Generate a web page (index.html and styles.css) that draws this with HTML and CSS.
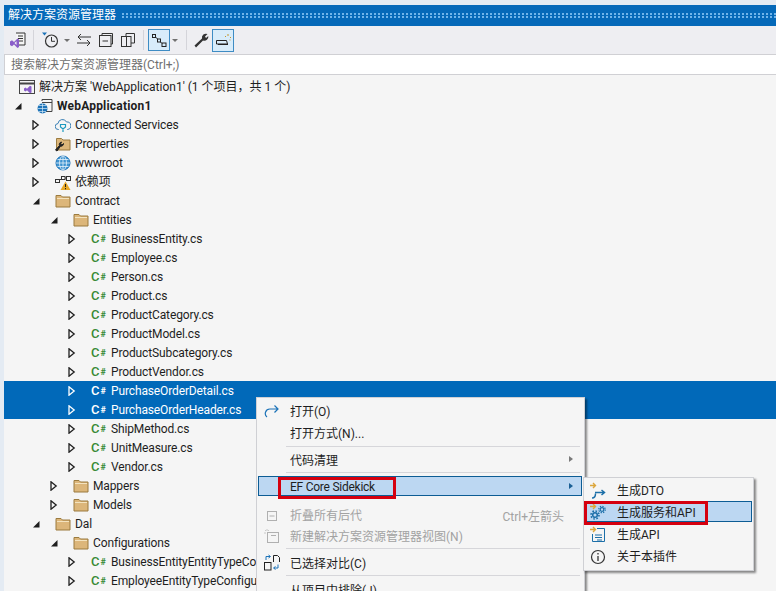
FILE: index.html
```html
<!DOCTYPE html>
<html lang="zh-CN">
<head>
<meta charset="utf-8">
<title>解决方案资源管理器</title>
<link rel="stylesheet" href="styles.css">
</head>
<body>
<svg class="defs" width="0" height="0" aria-hidden="true">
  <symbol id="folder" viewBox="0 0 16 16"><path d="M1 2.500h5l1.500 1.500H15v10H1z" fill="#dcb67a" stroke="#9b7b3f"/><path d="M2 5.500h12" stroke="#f3e3bf"/></symbol>
  <symbol id="open" viewBox="0 0 10 10"><path d="M2 0.800v8.400L7.200 5z" fill="none" stroke="#1e1e1e" stroke-width="1.300"/></symbol>
  <symbol id="opened" viewBox="0 0 10 10"><path d="M8.500 2v6.500h-6.500z" fill="#1e1e1e"/></symbol>
  <symbol id="openw" viewBox="0 0 10 10"><path d="M2 0.800v8.400L7.200 5z" fill="none" stroke="#fff" stroke-width="1.300"/></symbol>
</svg>

<div class="window">
  <header class="title"><span class="title-text">解决方案资源管理器</span><span class="grip"></span></header>

  <div class="toolbar">
    <span class="tb"><svg width="18" height="18" viewBox="0 0 18 18"><path d="M7 2h9v12H8" fill="#f5f5f5" stroke="#333"/><path d="M9 5h5M9 7.500h5M9 10h5" stroke="#333"/><path d="M1 10.500l2-1.200 2 1.700 3.500-3.500 1.500 1v7.500l-1.500 1-3.500-3.500-2 1.700-2-1.200z" fill="#8a5ec9"/><path d="M7.500 10.200v3.800l-2-1.900z" fill="#f5f5f5"/></svg></span>
    <i class="sep s1"></i>
    <span class="tb"><svg width="18" height="18" viewBox="0 0 18 18"><path d="M1 1.500h5l-2.500 3z" fill="#1c73b8"/><circle cx="10.500" cy="10" r="6" fill="none" stroke="#333" stroke-width="1.200"/><path d="M10.500 6v4.300h3.500" fill="none" stroke="#333"/></svg></span>
    <span class="drop"></span>
    <span class="tb"><svg width="16" height="14" viewBox="0 0 16 14"><path d="M15 4H2M5 1L2 4l3 3M1 10h13M11 7l3 3-3 3" fill="none" stroke="#333"/></svg></span>
    <span class="tb g1"><svg width="16" height="16" viewBox="0 0 16 16"><path d="M4 3V1.500h10.500V12H13" fill="none" stroke="#333"/><rect x="1.500" y="3.500" width="11.500" height="11" fill="none" stroke="#333"/><path d="M4.500 9h5.500" stroke="#333"/></svg></span>
    <span class="tb g1"><svg width="16" height="16" viewBox="0 0 16 16"><path d="M6 4V1.500h8.500V11H11" fill="none" stroke="#333"/><rect x="1.500" y="4.500" width="9.500" height="10" fill="none" stroke="#333"/><path d="M6.500 4.500v10" stroke="#333"/></svg></span>
    <i class="sep"></i>
    <span class="tb on small"><svg width="16" height="16" viewBox="0 0 16 16"><g fill="none" stroke="#222"><rect x="1.500" y="2.500" width="3" height="3"/><rect x="6.500" y="7" width="3" height="3"/><rect x="11" y="11" width="4" height="3.500"/><path d="M4.500 5l2 2M9.500 10l1.500 1.500"/></g></svg></span>
    <span class="drop d2"></span>
    <i class="sep"></i>
    <span class="tb"><svg width="16" height="16" viewBox="0 0 16 16"><path d="M1.500 13.500L9 6.500a4 4 0 0 1 5.500-4.500l-2.500 2.500 1 1.500 2.300-2a4 4 0 0 1-5.300 4.500l-7 7z" fill="#333"/></svg></span>
    <span class="tb on big"><svg width="17" height="14" viewBox="0 0 17 14"><path d="M1.500 7.500h10l1 3.500H1.500z" fill="none" stroke="#222"/><path d="M3 11.500h10" stroke="#222"/><path d="M10 3l1 1M13 1v2M16 4l-1 1M15.500 7h-1" stroke="#c4962c"/></svg></span>
  </div>

  <div class="search">搜索解决方案资源管理器(Ctrl+;)</div>

  <ul class="tree">
    <li class="row sln"><svg class="ic" width="16" height="16" viewBox="0 0 16 16"><rect x="0.500" y="1.500" width="15" height="13" fill="none" stroke="#444"/><path d="M0.500 4.500h15" stroke="#444" stroke-width="2"/><path d="M5 9.500l1.500-1 1.500 1.300 3-3 1.500.7v6l-1.500.7-3-3-1.500 1.300-1.500-1z" fill="#8a5ec9"/></svg><span>解决方案 'WebApplication1' (1 个项目，共 1 个)</span></li>
    <li class="row l0"><svg class="tg"><use href="#opened"/></svg><svg class="ic" width="16" height="16" viewBox="0 0 16 16"><path d="M5 3V1.500h10v12H9" fill="none" stroke="#444"/><path d="M5 4.500h10" stroke="#444"/><circle cx="5.500" cy="10.500" r="5" fill="#1c73b8"/><path d="M.5 10.500h10M5.500 5.500v10M2 7.500h7M2 13.500h7" stroke="#d6e8f5" stroke-width=".7"/></svg><b>WebApplication1</b></li>
    <li class="row l1"><svg class="tg"><use href="#open"/></svg><svg class="ic" width="16" height="16" viewBox="0 0 16 16"><path d="M4 12.500H3.500a3 3 0 0 1-.5-6 4.500 4.500 0 0 1 8.500-1.500 3.700 3.700 0 0 1 1 7.500H12" fill="none" stroke="#3a80b5"/><path d="M5.500 7.500h5v2.500l-2.500 2-2.500-2zM8 12v3" fill="none" stroke="#1c9ac0" stroke-width="1.200"/></svg><span>Connected Services</span></li>
    <li class="row l1"><svg class="tg"><use href="#open"/></svg><svg class="ic" width="16" height="16" viewBox="0 0 16 16"><path d="M1.500 2.500h5L8 4h7v10H1.500z" fill="#dcb67a" stroke="#9b7b3f"/><path d="M0.500 14l4-4.500a2.500 2.500 0 0 1 2-3.500L5.500 8l1.500 1 1.500-1.500a2.500 2.500 0 0 1-3 2.700L2 15z" fill="#222" stroke="#222"/></svg><span>Properties</span></li>
    <li class="row l1"><svg class="tg"><use href="#open"/></svg><svg class="ic" width="16" height="16" viewBox="0 0 16 16"><circle cx="8" cy="8" r="7" fill="#3f94d1" stroke="#1c73b8"/><path d="M1 8h14M8 1v14M2.500 4.500h11M2.500 11.500h11" stroke="#e4f1fa" stroke-width=".8"/><ellipse cx="8" cy="8" rx="3.500" ry="7" fill="none" stroke="#e4f1fa" stroke-width=".8"/></svg><span>wwwroot</span></li>
    <li class="row l1"><svg class="tg"><use href="#open"/></svg><svg class="ic" width="16" height="16" viewBox="0 0 16 16"><g fill="none" stroke="#333"><rect x="0.500" y="5.500" width="4" height="3"/><rect x="6.500" y="2.500" width="3.500" height="3"/><rect x="11.500" y="2.500" width="4" height="4"/><path d="M4.500 6.500l2-2M10 4h1.500"/></g><path d="M10.500 7.500l-5 8.500h10z" fill="#e8a826"/><path d="M10.500 10v3M10.500 14v1.300" stroke="#222"/></svg><span>依赖项</span></li>
    <li class="row l1"><svg class="tg"><use href="#opened"/></svg><svg class="ic"><use href="#folder"/></svg><span>Contract</span></li>
    <li class="row l2"><svg class="tg"><use href="#opened"/></svg><svg class="ic"><use href="#folder"/></svg><span>Entities</span></li>
    <li class="row l3"><svg class="tg"><use href="#open"/></svg><span class="cs">C<small>#</small></span><span>BusinessEntity.cs</span></li>
    <li class="row l3"><svg class="tg"><use href="#open"/></svg><span class="cs">C<small>#</small></span><span>Employee.cs</span></li>
    <li class="row l3"><svg class="tg"><use href="#open"/></svg><span class="cs">C<small>#</small></span><span>Person.cs</span></li>
    <li class="row l3"><svg class="tg"><use href="#open"/></svg><span class="cs">C<small>#</small></span><span>Product.cs</span></li>
    <li class="row l3"><svg class="tg"><use href="#open"/></svg><span class="cs">C<small>#</small></span><span>ProductCategory.cs</span></li>
    <li class="row l3"><svg class="tg"><use href="#open"/></svg><span class="cs">C<small>#</small></span><span>ProductModel.cs</span></li>
    <li class="row l3"><svg class="tg"><use href="#open"/></svg><span class="cs">C<small>#</small></span><span>ProductSubcategory.cs</span></li>
    <li class="row l3"><svg class="tg"><use href="#open"/></svg><span class="cs">C<small>#</small></span><span>ProductVendor.cs</span></li>
    <li class="row l3 sel"><svg class="tg"><use href="#openw"/></svg><span class="cs">C<small>#</small></span><span>PurchaseOrderDetail.cs</span></li>
    <li class="row l3 sel"><svg class="tg"><use href="#openw"/></svg><span class="cs">C<small>#</small></span><span>PurchaseOrderHeader.cs</span></li>
    <li class="row l3"><svg class="tg"><use href="#open"/></svg><span class="cs">C<small>#</small></span><span>ShipMethod.cs</span></li>
    <li class="row l3"><svg class="tg"><use href="#open"/></svg><span class="cs">C<small>#</small></span><span>UnitMeasure.cs</span></li>
    <li class="row l3"><svg class="tg"><use href="#open"/></svg><span class="cs">C<small>#</small></span><span>Vendor.cs</span></li>
    <li class="row l2"><svg class="tg"><use href="#open"/></svg><svg class="ic"><use href="#folder"/></svg><span>Mappers</span></li>
    <li class="row l2"><svg class="tg"><use href="#open"/></svg><svg class="ic"><use href="#folder"/></svg><span>Models</span></li>
    <li class="row l1"><svg class="tg"><use href="#opened"/></svg><svg class="ic"><use href="#folder"/></svg><span>Dal</span></li>
    <li class="row l2"><svg class="tg"><use href="#opened"/></svg><svg class="ic"><use href="#folder"/></svg><span>Configurations</span></li>
    <li class="row l3"><svg class="tg"><use href="#open"/></svg><span class="cs">C<small>#</small></span><span>BusinessEntityEntityTypeConfiguration.cs</span></li>
    <li class="row l3"><svg class="tg"><use href="#open"/></svg><span class="cs">C<small>#</small></span><span>EmployeeEntityTypeConfiguration.cs</span></li>
  </ul>
</div>

<div class="menu">
  <div class="mi r20"><svg class="mic" width="16" height="16" viewBox="0 0 16 16"><path d="M14 5H6a4.500 4.500 0 0 0-3 8M10.500 1.500L14 5l-3.500 3.500" fill="none" stroke="#1c73b8" stroke-width="1.200"/></svg><span>打开(O)</span></div>
  <div class="mi r23"><span>打开方式(N)...</span></div>
  <hr class="msep">
  <div class="mi r22 up"><span>代码清理</span><i class="arrow"></i></div>
  <hr class="msep">
  <div class="mi hl"><span>EF Core Sidekick</span><i class="arrow blue"></i></div>
  <hr class="msep clear">
  <div class="mi dis r21"><svg class="mic" width="16" height="16" viewBox="0 0 16 16"><rect x="3.500" y="3.500" width="9" height="9" fill="none" stroke="#b0b0b0"/><path d="M5.500 8h5" stroke="#b0b0b0"/></svg><span>折叠所有后代</span><em>Ctrl+左箭头</em></div>
  <div class="mi dis r21"><svg class="mic" width="16" height="16" viewBox="0 0 16 16"><rect x="3.500" y="3.500" width="11" height="10" fill="none" stroke="#b0b0b0"/><path d="M7 6.500h5" stroke="#b0b0b0"/><path d="M1 1l1 1M3 0v2M5 1L4 2M0 4h2" stroke="#c8c8c8"/></svg><span>新建解决方案资源管理器视图(N)</span></div>
  <hr class="msep">
  <div class="mi r22"><svg class="mic cmp" width="18" height="18" viewBox="0 0 18 18"><g fill="none" stroke="#222"><rect x="1.500" y="8.500" width="6.500" height="7.500"/><path d="M10.500 8V1.500h4l2 2V8"/></g><path d="M3 6V2.500h4M5.500 1L7.500 2.500 5.500 4" fill="none" stroke="#1c73b8"/><path d="M15 10.500v3.500h-4M12.500 12.500L10.500 14l2 1.500" fill="none" stroke="#1c73b8"/></svg><span>已选择对比(C)</span></div>
  <hr class="msep">
  <div class="mi r22"><span>从项目中排除(J)</span></div>
</div>

<div class="submenu">
  <div class="si"><svg width="18" height="18" viewBox="0 0 18 18"><path d="M1 3.500h5M4 1l2.500 2.500L4 6" fill="none" stroke="#dca63b" stroke-width="1.400"/><path d="M3 16c3 0 3.500-2 3.500-4.500M6 10.500h9M12.500 8l3 2.500-3 2.500" fill="none" stroke="#1c6fa8" stroke-width="1.500"/></svg><span>生成DTO</span></div>
  <div class="si act"><svg width="18" height="18" viewBox="0 0 18 18"><path d="M1 3.500h5M4 1l2.500 2.500L4 6" fill="none" stroke="#dca63b" stroke-width="1.400"/><circle cx="6" cy="12" r="2.300" fill="none" stroke="#1c6fa8" stroke-width="1.500"/><circle cx="6" cy="12" r="4" fill="none" stroke="#1c6fa8" stroke-width="1.600" stroke-dasharray="1.600 1.540"/><circle cx="13" cy="6.500" r="1.800" fill="none" stroke="#1c6fa8" stroke-width="1.200"/><circle cx="13" cy="6.500" r="3.200" fill="none" stroke="#1c6fa8" stroke-width="1.300" stroke-dasharray="1.300 1.210"/></svg><span>生成服务和API</span></div>
  <div class="si gap"><svg width="18" height="18" viewBox="0 0 18 18"><path d="M1 3.500h5M4 1l2.500 2.500L4 6" fill="none" stroke="#dca63b" stroke-width="1.400"/><path d="M8 2.500h7.500v13h-12V8" fill="none" stroke="#1c6fa8"/><path d="M6 9h7M6 11.500h7M8 14h5" stroke="#1c6fa8"/></svg><span>生成API</span></div>
  <div class="si"><svg width="18" height="18" viewBox="0 0 18 18"><circle cx="9" cy="9" r="6.500" fill="none" stroke="#333" stroke-width="1.200"/><path d="M9 8v5M9 5v1.500" stroke="#333" stroke-width="1.300"/></svg><span>关于本插件</span></div>
</div>

<div class="mark mark-ef"></div>
<div class="mark mark-api"></div>
</body>
</html>
```

FILE: styles.css
```css
* { box-sizing: border-box; }
html, body { margin: 0; height: 100%; }
body {
  width: 776px;
  height: 591px;
  overflow: hidden;
  position: relative;
  background: #e4ebf3;
  font: 12px/19px Roboto, "Noto Sans CJK SC", sans-serif;
  color: #1e1e1e;
}
.defs { position: absolute; }

.window {
  margin: 5px 0 0 4px;
  height: 586px;
  overflow: hidden;
  background: #f5f5f5;
}
.title {
  height: 21px;
  background: #0569b9;
  color: #fff;
  display: flex;
  align-items: center;
  padding-left: 4px;
  line-height: 21px;
}
.title-text { width: 114px; flex: none; }
.grip {
  flex: 1;
  height: 6px;
  background-image: radial-gradient(circle at 1px 1px, #6fb4ea 0.8px, transparent 1px);
  background-size: 4px 3px;
}
.toolbar {
  height: 28px;
  background: #eeeef2;
  display: flex;
  align-items: center;
  padding-left: 4px;
}
.tb {
  display: flex;
  align-items: center;
  justify-content: center;
  width: 20px;
  height: 22px;
  flex: none;
}
.g1 { margin-left: 2px; }
.sep {
  width: 1px;
  height: 20px;
  background: #d4d4da;
  margin: 0 4px 0 5px;
  flex: none;
}
.s1 { margin-right: 6px; }
.drop {
  width: 0;
  height: 0;
  border: 3px solid transparent;
  border-top: 3px solid #707070;
  border-bottom: 0;
  margin: 0 4px;
  flex: none;
}
.d2 { margin: 0 3px 0 2px; }
.on {
  background: #d8ecfa;
  border: 1px solid #3e8cc4;
}
.small { width: 22px; height: 22px; }
.big { width: 22px; height: 23px; margin-left: 1px; }
.search {
  height: 21px;
  margin-bottom: 2px;
  background: #fff;
  border-top: 1px solid #d0d0d4;
  border-bottom: 1px solid #d0d0d4;
  border-left: 1px solid #d0d0d4;
  padding-left: 6px;
  padding-top: 1px;
  line-height: 19px;
  color: #6f6f6f;
}
.tree { list-style: none; margin: 0; padding: 0; }
.row {
  height: 19px;
  display: flex;
  align-items: center;
  white-space: nowrap;
  letter-spacing: -0.13px;
}
.row > span:not(.cs), .row > b,
.mi > span, .si > span { padding-top: 2px; }
.tg { width: 10px; height: 10px; flex: none; margin-right: 14px; }
.ic { width: 16px; height: 16px; flex: none; margin-right: 4px; }
.cs {
  width: 16px;
  flex: none;
  margin-right: 4px;
  padding-top: 1px;
  color: #388a34;
  font-size: 13px;
  font-weight: 500;
  letter-spacing: 0;
  display: flex;
  align-items: baseline;
}
.cs small { font-size: 9px; margin-left: 1px; font-weight: 700; transform: translateY(-1px); }
.sel .cs { color: #fff; }
.row b { font-weight: 700; letter-spacing: 0.2px; }
.sln { padding-left: 15px; letter-spacing: 0; }
.l0 { padding-left: 9px; }
.l1 { padding-left: 27px; }
.l2 { padding-left: 45px; }
.l3 { padding-left: 63px; }
.sel { background: #0169b9; color: #fff; }

.menu {
  position: absolute;
  left: 256px;
  top: 397px;
  width: 329px;
  height: 210px;
  padding-top: 3px;
  background: #f5f5f5;
  border: 1px solid #cfd0d4;
  box-shadow: 2px 2px 2px rgba(0, 0, 0, .45);
}
.mi {
  position: relative;
  display: flex;
  align-items: center;
  margin: 0 2px 0 1px;
  padding-left: 31px;
  height: 22px;
  white-space: nowrap;
  border: 1px solid transparent;
}
.r20 { height: 21px; }
.r23 { height: 23px; }
.r22 { height: 22px; }
.r21 { height: 21px; }
.up { margin-top: -1px; margin-bottom: 1px; }
.mic { position: absolute; left: 5px; top: 2px; }
.cmp { left: 4px; top: 1px; }
.msep {
  height: 1px;
  margin: 1px 4px 3px 29px;
  border: 0;
  background: #d6d6da;
}
.msep.clear { background: transparent; margin: 8px 4px 0 29px; }
.hl {
  height: 20px;
  background: #bcd7f2;
  border-color: #0c5c94;
  letter-spacing: -0.25px;
}
.hl > span { padding-top: 3px; }
.arrow {
  position: absolute;
  right: 8px;
  top: 6px;
  border: 3px solid transparent;
  border-left: 4px solid #7a7a7a;
  border-right: 0;
}
.arrow.blue { border-left-color: #1a5f94; }
.dis { color: #a2a2a2; }
.dis em { position: absolute; right: 17px; top: 2px; font-style: normal; }

.submenu {
  position: absolute;
  left: 583px;
  top: 477px;
  width: 171px;
  height: 94px;
  padding: 2px 1px 0;
  background: #f5f5f5;
  border: 1px solid #cfd0d4;
  box-shadow: 2px 2px 2px rgba(0, 0, 0, .45);
}
.si {
  height: 21px;
  display: flex;
  align-items: center;
  padding-left: 3px;
  white-space: nowrap;
  border: 1px solid transparent;
}
.act > span { padding-top: 4px; }
.gap { margin-top: 2px; }
.si:last-child { margin-top: 1px; }
.si svg { flex: none; margin-right: 10px; }
.act { background: #bcd7f2; border-color: #0c5c94; }
.mark { position: absolute; border: 3px solid #d5000f; }
.mark-ef { left: 278px; top: 477px; width: 118px; height: 22px; }
.mark-api { left: 584px; top: 501px; width: 124px; height: 24px; }
```
